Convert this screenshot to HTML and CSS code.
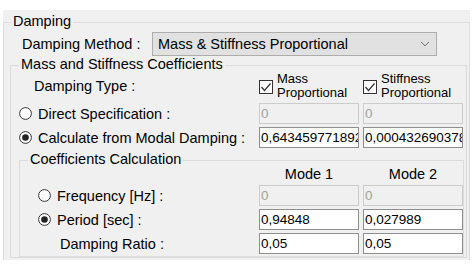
FILE: index.html
```html
<!DOCTYPE html>
<html>
<head>
<meta charset="utf-8">
<link rel="stylesheet" href="styles.css">
</head>
<body>
<div class="panel">
  <div class="group g-damp">
    <div class="legend">Damping</div>
    <div class="method-row">
      <span class="method-label">Damping Method :</span>
      <div class="combo">
        <span class="combo-text">Mass &amp; Stiffness Proportional</span>
        <svg class="chev" width="10" height="6" viewBox="0 0 10 6"><polyline points="1,1 5,4.8 9,1" fill="none" stroke="#707070" stroke-width="1"/></svg>
      </div>
    </div>
    <div class="group g-mass">
      <div class="legend">Mass and Stiffness Coefficients</div>
      <div class="mass-grid">
        <div class="lbl type-lbl">Damping Type :</div>
        <div class="chk">
          <svg class="box" width="14" height="14" viewBox="0 0 14 14"><rect x="0.5" y="0.5" width="13" height="13" fill="#fff" stroke="#333"/><polyline points="2.5,7 5.5,10.5 11.5,3.5" fill="none" stroke="#333" stroke-width="1.2"/></svg>
          <span class="chk-text">Mass<br>Proportional</span>
        </div>
        <div class="chk">
          <svg class="box" width="14" height="14" viewBox="0 0 14 14"><rect x="0.5" y="0.5" width="13" height="13" fill="#fff" stroke="#333"/><polyline points="2.5,7 5.5,10.5 11.5,3.5" fill="none" stroke="#333" stroke-width="1.2"/></svg>
          <span class="chk-text">Stiffness<br>Proportional</span>
        </div>

        <div class="lbl radio-lbl r1">
          <svg class="radio" width="13" height="13" viewBox="0 0 13 13"><circle cx="6.5" cy="6.5" r="5.9" fill="#fff" stroke="#333"/></svg>
          <span>Direct Specification :</span>
        </div>
        <div class="edit disabled">0</div>
        <div class="edit disabled">0</div>

        <div class="lbl radio-lbl r1">
          <svg class="radio" width="13" height="13" viewBox="0 0 13 13"><circle cx="6.5" cy="6.5" r="5.9" fill="#fff" stroke="#333"/><circle cx="6.5" cy="6.5" r="3.3" fill="#222"/></svg>
          <span>Calculate from Modal Damping :</span>
        </div>
        <div class="edit">0,643459771892</div>
        <div class="edit">0,000432690378</div>
      </div>

      <div class="group g-coef">
        <div class="legend">Coefficients Calculation</div>
        <div class="coef-grid">
          <div></div>
          <div class="mode">Mode 1</div>
          <div class="mode">Mode 2</div>

          <div class="lbl radio-lbl r2">
            <svg class="radio" width="13" height="13" viewBox="0 0 13 13"><circle cx="6.5" cy="6.5" r="5.9" fill="#fff" stroke="#333"/></svg>
            <span>Frequency [Hz] :</span>
          </div>
          <div class="edit disabled">0</div>
          <div class="edit disabled">0</div>

          <div class="lbl radio-lbl r2">
            <svg class="radio" width="13" height="13" viewBox="0 0 13 13"><circle cx="6.5" cy="6.5" r="5.9" fill="#fff" stroke="#333"/><circle cx="6.5" cy="6.5" r="3.3" fill="#222"/></svg>
            <span>Period [sec] :</span>
          </div>
          <div class="edit">0,94848</div>
          <div class="edit">0,027989</div>

          <div class="lbl ratio-lbl">Damping Ratio :</div>
          <div class="edit">0,05</div>
          <div class="edit">0,05</div>
        </div>
      </div>
    </div>
  </div>
</div>
</body>
</html>
```
FILE: styles.css
```css
html, body {
  margin: 0;
  padding: 0;
  background: #ffffff;
}
body {
  font-family: "Liberation Sans", Arial, sans-serif;
  font-size: 14.5px;
  color: #000;
  width: 476px;
  height: 265px;
  overflow: hidden;
}
.panel {
  margin: 10px 0 0 3px;
  width: 467px;
  height: 250px;
  background: #f0f0f0;
  overflow: hidden;
  padding-top: 12px;
  box-sizing: border-box;
}
.group {
  border: 1px solid #dcdcdc;
  box-sizing: border-box;
}
.legend {
  display: block;
  width: fit-content;
  height: 16px;
  line-height: 16px;
  margin-top: -10px;
  margin-left: 8px;
  padding: 0 2px;
  background: #f0f0f0;
  white-space: nowrap;
}
.g-damp {
  width: 467px;
  height: 260px;
}
.g-damp > .legend {
  margin-left: 7px;
}
.method-row {
  display: flex;
  align-items: center;
  margin-top: 3px;
  padding-left: 18px;
  height: 24px;
}
.method-label {
  width: 130px;
  white-space: nowrap;
}
.combo {
  width: 285px;
  height: 24px;
  box-sizing: border-box;
  border: 1px solid #adadad;
  background: #e1e1e1;
  display: flex;
  align-items: center;
  justify-content: space-between;
  padding: 0 6px 0 5px;
}
.combo-text {
  white-space: nowrap;
}
.chev {
  display: block;
}
.g-mass {
  margin: 9px 0 0 6px;
  width: 457px;
}
.mass-grid {
  display: grid;
  grid-template-columns: 244px 100px 100px;
  grid-template-rows: 28px 21px 21px;
  column-gap: 4px;
  row-gap: 3px;
}
.lbl {
  white-space: nowrap;
  display: flex;
  align-items: center;
}
.type-lbl {
  padding-left: 23px;
}
.chk {
  display: flex;
  align-items: flex-start;
}
.box {
  display: block;
  margin-top: 8px;
  margin-right: 4px;
  flex: none;
}
.chk-text {
  font-size: 13px;
  line-height: 14px;
  white-space: nowrap;
}
.radio {
  display: block;
  flex: none;
  margin-right: 6px;
}
.r1 {
  padding-left: 8px;
}
.r2 {
  padding-left: 18px;
}
.ratio-lbl {
  padding-left: 40px;
}
.edit {
  height: 21px;
  box-sizing: border-box;
  border: 1px solid #8f8f8f;
  background: #ffffff;
  font-size: 13.5px;
  line-height: 19px;
  padding-left: 1px;
  white-space: nowrap;
  overflow: hidden;
}
.edit.disabled {
  border-color: #cccccc;
  background: #f0f0f0;
  color: #a0a0a0;
}
.g-coef {
  margin: 12px 0 0 8px;
  width: 445px;
  padding-bottom: 2px;
}
.coef-grid {
  display: grid;
  grid-template-columns: 235px 100px 100px;
  grid-template-rows: 15px 21px 21px 21px;
  column-gap: 4px;
  row-gap: 3px;
}
.mode {
  text-align: center;
  line-height: 15px;
  white-space: nowrap;
}
```
